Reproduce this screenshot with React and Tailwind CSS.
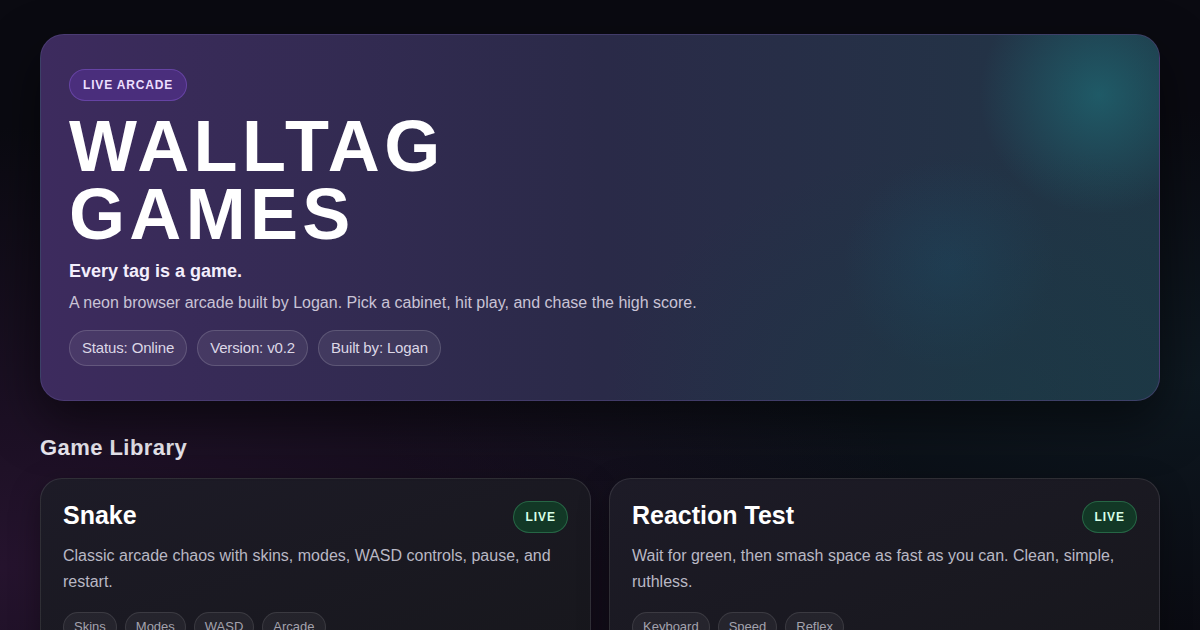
import React from 'react';

const chips = ['Status: Online', 'Version: v0.2', 'Built by: Logan'];

const games = [
  {
    title: 'Snake',
    desc: 'Classic arcade chaos with skins, modes, WASD controls, pause, and restart.',
    tags: ['Skins', 'Modes', 'WASD', 'Arcade'],
  },
  {
    title: 'Reaction Test',
    desc: 'Wait for green, then smash space as fast as you can. Clean, simple, ruthless.',
    tags: ['Keyboard', 'Speed', 'Reflex'],
  },
];

const GameCard = ({ game }) => (
  <div className="rounded-[22px] border border-white/10 bg-gradient-to-br from-[#1d1b27] to-[#17171c] px-[22px] pt-[22px] pb-6 shadow-[0_10px_30px_rgba(0,0,0,0.35)]">
    <div className="flex items-start justify-between">
      <h3 className="text-[25px] font-bold leading-7 text-white">{game.title}</h3>
      <span className="flex h-8 items-center rounded-full border border-[#2f7a52]/70 bg-[#123826] px-[11px] text-[12px] font-bold tracking-[0.08em] text-[#d8ffe8]">
        LIVE
      </span>
    </div>
    <p className="mt-[10px] text-[16px] leading-[26px] text-[#b9b8c4]">{game.desc}</p>
    <div className="mt-[17px] flex gap-2">
      {game.tags.map((t) => (
        <span
          key={t}
          className="flex h-[30px] items-center rounded-full border border-white/10 bg-white/5 px-[10px] text-[13px] text-[#a3a2ad]"
        >
          {t}
        </span>
      ))}
    </div>
  </div>
);

export default function App() {
  return (
    <div
      className="relative h-[630px] w-[1200px] overflow-hidden bg-[#0a0a11] text-white"
      style={{ fontFamily: '"Liberation Sans", Arial, sans-serif' }}
    >
      <div className="pointer-events-none absolute inset-0 bg-[radial-gradient(ellipse_at_0%_90%,rgba(70,30,80,0.45),transparent_55%),radial-gradient(ellipse_at_100%_60%,rgba(20,50,60,0.35),transparent_50%)]" />

      <div className="relative px-10 pt-[34px]">
        <section className="relative overflow-hidden rounded-[24px] border border-[#5a4b8a]/50 bg-gradient-to-r from-[#3d2b5e] via-[#2a2a48] to-[#1f3645] px-[28px] pt-[34px] pb-[34px] shadow-[0_20px_50px_rgba(0,0,0,0.5)]">
          <div className="pointer-events-none absolute -right-[70px] -top-[70px] h-[260px] w-[260px] rounded-full bg-[radial-gradient(circle,rgba(30,115,125,0.6),transparent_65%)]" />
          <div className="pointer-events-none absolute right-[90px] top-[120px] h-[220px] w-[240px] rounded-full bg-[radial-gradient(circle,rgba(30,80,110,0.35),transparent_65%)]" />
          <div className="pointer-events-none absolute right-0 bottom-0 h-[260px] w-[560px] bg-[radial-gradient(ellipse_at_70%_100%,rgba(20,62,68,0.4),transparent_70%)]" />

          <div className="relative">
            <span className="inline-flex h-8 items-center rounded-full border border-[#7a52c0]/60 bg-[#4a2e7c] px-[13px] text-[12px] font-bold tracking-[0.07em] text-[#ecdfff]">
              LIVE ARCADE
            </span>
            <h1 className="mt-[11px] text-[72px] font-bold leading-[0.95] tracking-[0.06em] text-white">
              WALLTAG
              <br />
              GAMES
            </h1>
            <p className="mt-2 text-[18px] font-bold leading-7 text-[#f3eefc]">Every tag is a game.</p>
            <p className="mt-[6px] text-[16px] leading-6 text-[#c9c3d6]">
              A neon browser arcade built by Logan. Pick a cabinet, hit play, and chase the high score.
            </p>
            <div className="mt-[15px] flex gap-[10px]">
              {chips.map((c) => (
                <span
                  key={c}
                  className="flex h-9 items-center rounded-full border border-white/15 bg-white/[0.07] px-[12px] text-[15px] tracking-[-0.01em] text-[#dcd7e6]"
                >
                  {c}
                </span>
              ))}
            </div>
          </div>
        </section>

        <h2 className="mt-[33px] text-[22px] font-bold leading-7 tracking-[0.02em] text-[#eceaf2]">Game Library</h2>

        <div className="mt-4 grid grid-cols-2 gap-[18px]">
          {games.map((g) => (
            <GameCard key={g.title} game={g} />
          ))}
        </div>
      </div>
    </div>
  );
}
